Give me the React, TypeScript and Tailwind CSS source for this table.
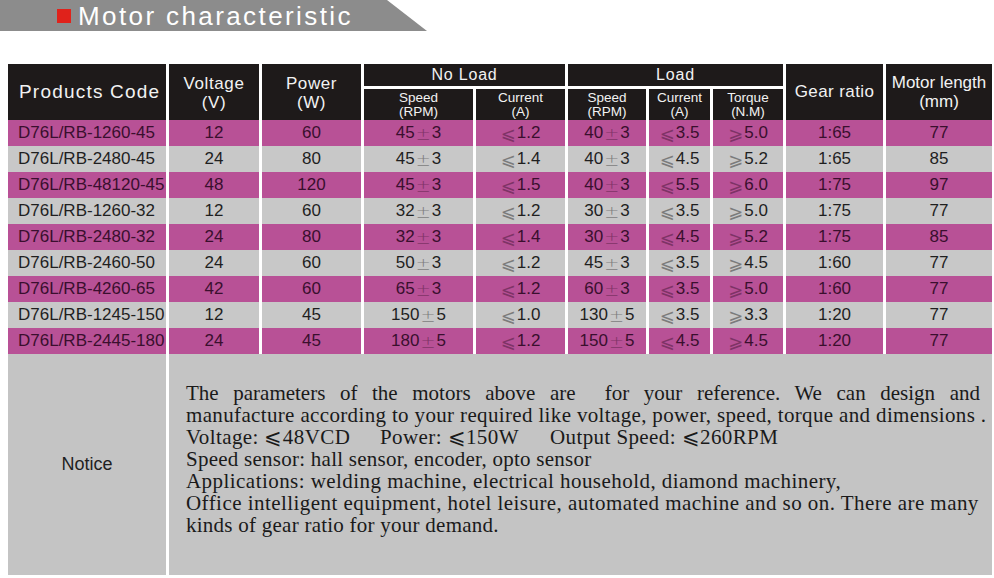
import React from "react";

const cols = "grid-cols-[158px_90px_99px_109px_89px_78px_61px_70px_97px_106px]";

const rows: string[][] = [
  ["D76L/RB-1260-45", "12", "60", "45±3", "≤1.2", "40±3", "≤3.5", "≥5.0", "1:65", "77"],
  ["D76L/RB-2480-45", "24", "80", "45±3", "≤1.4", "40±3", "≤4.5", "≥5.2", "1:65", "85"],
  ["D76L/RB-48120-45", "48", "120", "45±3", "≤1.5", "40±3", "≤5.5", "≥6.0", "1:75", "97"],
  ["D76L/RB-1260-32", "12", "60", "32±3", "≤1.2", "30±3", "≤3.5", "≥5.0", "1:75", "77"],
  ["D76L/RB-2480-32", "24", "80", "32±3", "≤1.4", "30±3", "≤4.5", "≥5.2", "1:75", "85"],
  ["D76L/RB-2460-50", "24", "60", "50±3", "≤1.2", "45±3", "≤3.5", "≥4.5", "1:60", "77"],
  ["D76L/RB-4260-65", "42", "60", "65±3", "≤1.2", "60±3", "≤3.5", "≥5.0", "1:60", "77"],
  ["D76L/RB-1245-150", "12", "45", "150±5", "≤1.0", "130±5", "≤3.5", "≥3.3", "1:20", "77"],
  ["D76L/RB-2445-180", "24", "45", "180±5", "≤1.2", "150±5", "≤4.5", "≥4.5", "1:20", "77"],
];

// symbols are drawn thinner and lighter, like in the catalogue
function Value({ v }: { v: string }) {
  if (v.startsWith("≤") || v.startsWith("≥")) {
    return (
      <>
        <span className="mr-[1px] font-['DejaVu_Sans',sans-serif] text-[18px] opacity-45">
          {v.startsWith("≤") ? "⩽" : "⩾"}
        </span>
        {v.slice(1)}
      </>
    );
  }
  if (v.includes("±")) {
    const [a, b] = v.split("±");
    return (
      <>
        {a}
        <span className="mx-[1px] font-['DejaVu_Sans',sans-serif] text-[18px] font-light opacity-45">±</span>
        {b}
      </>
    );
  }
  return <>{v}</>;
}

function HeadCell({ children, className = "" }: { children: React.ReactNode; className?: string }) {
  return (
    <div className={`flex flex-col justify-center whitespace-nowrap bg-[#1e1a1a] text-[#f2f2f2] ${className}`}>
      {children}
    </div>
  );
}

function Sub({ top, bottom, col }: { top: string; bottom: string; col: string }) {
  return (
    <HeadCell className={`${col} row-start-2 items-center pt-[1px] text-center text-[13.5px] leading-[14px]`}>
      <span>{top}</span>
      <span>{bottom}</span>
    </HeadCell>
  );
}

export default function App() {
  return (
    <div className="h-[578px] w-[994px] overflow-hidden bg-white font-['Liberation_Sans',Arial,sans-serif]">
      {/* title banner */}
      <div className="flex h-[31px] w-[427px] items-center bg-[#8c8c8c] [clip-path:polygon(0_0,387px_0,427px_100%,0_100%)]">
        <span className="ml-[57px] h-[14px] w-[14px] bg-[#e0221b]" />
        <span className="ml-[7px] text-[26px] leading-none tracking-[2.4px] text-white">Motor characteristic</span>
      </div>

      <div className="ml-[8px] mt-[33px] w-[984px]">
        {/* header */}
        <div className={`grid ${cols} grid-rows-[22px_31px] gap-[3px]`}>
          <HeadCell className="col-start-1 row-span-2 row-start-1 items-start pl-[11px] text-[19px] tracking-[1.2px]">
            Products Code
          </HeadCell>
          <HeadCell className="col-start-2 row-span-2 row-start-1 items-center pt-[2px] text-center text-[17px] leading-[19px] tracking-[0.6px]">
            <span>Voltage</span>
            <span>(V)</span>
          </HeadCell>
          <HeadCell className="col-start-3 row-span-2 row-start-1 items-center pt-[2px] text-center text-[17px] leading-[19px] tracking-[0.6px]">
            <span>Power</span>
            <span>(W)</span>
          </HeadCell>
          <HeadCell className="col-span-2 col-start-4 row-start-1 items-center text-[16px] tracking-[0.8px]">No Load</HeadCell>
          <HeadCell className="col-span-3 col-start-6 row-start-1 items-center text-[16px] tracking-[0.8px]">Load</HeadCell>
          <HeadCell className="col-start-9 row-span-2 row-start-1 items-center text-[17px] tracking-[0.4px]">Gear ratio</HeadCell>
          <HeadCell className="col-start-10 row-span-2 row-start-1 items-center text-center text-[17px] leading-[19px]">
            <span>Motor length</span>
            <span>(mm)</span>
          </HeadCell>
          <Sub col="col-start-4" top="Speed" bottom="(RPM)" />
          <Sub col="col-start-5" top="Current" bottom="(A)" />
          <Sub col="col-start-6" top="Speed" bottom="(RPM)" />
          <Sub col="col-start-7" top="Current" bottom="(A)" />
          <Sub col="col-start-8" top="Torque" bottom="(N.M)" />
        </div>

        {/* data */}
        {rows.map((r, i) => {
          const pink = i % 2 === 0;
          return (
            <div key={i} className={`grid ${cols} h-[26px] gap-x-[3px]`}>
              {r.map((v, j) => (
                <div
                  key={j}
                  className={`flex items-center overflow-hidden whitespace-nowrap text-[17px] ${
                    j === 0 ? "pl-[10px]" : "justify-center"
                  } ${pink ? "bg-[#b85196] text-[#3a0f2e]" : "bg-[#c8c8c8] text-[#1f1f1f]"}`}
                >
                  <Value v={v} />
                </div>
              ))}
            </div>
          );
        })}

        {/* notice */}
        <div className="grid h-[221px] grid-cols-[158px_823px] gap-x-[3px]">
          <div className="flex items-center justify-center bg-[#c4c4c4] text-[18px] text-[#1f1f1f]">Notice</div>
          <div className="bg-[#c4c4c4] pl-[17px] pr-[12px] pt-[28px] font-['Liberation_Serif','Times_New_Roman',serif] text-[21px] leading-[22px] text-[#1a1a1a]">
            <p className="text-justify [text-align-last:justify]">
              The parameters of the motors above are&nbsp; for your reference. We can design and
            </p>
            <p className="whitespace-nowrap tracking-[0.35px]">
              manufacture according to your required like voltage, power, speed, torque and dimensions .
            </p>
            <p className="flex whitespace-nowrap tracking-[0.4px]">
              <span className="w-[194px]">Voltage: ⩽48VCD</span>
              <span className="w-[170px]">Power: ⩽150W</span>
              <span>Output Speed: ⩽260RPM</span>
            </p>
            <p className="whitespace-nowrap tracking-[0.25px]">Speed sensor: hall sensor, encoder, opto sensor</p>
            <p className="whitespace-nowrap tracking-[0.45px]">
              Applications: welding machine, electrical household, diamond machinery,
            </p>
            <p className="whitespace-nowrap tracking-[0.45px]">
              Office intelligent equipment, hotel leisure, automated machine and so on. There are many
            </p>
            <p className="whitespace-nowrap tracking-[0.25px]">kinds of gear ratio for your demand.</p>
          </div>
        </div>
      </div>
    </div>
  );
}
